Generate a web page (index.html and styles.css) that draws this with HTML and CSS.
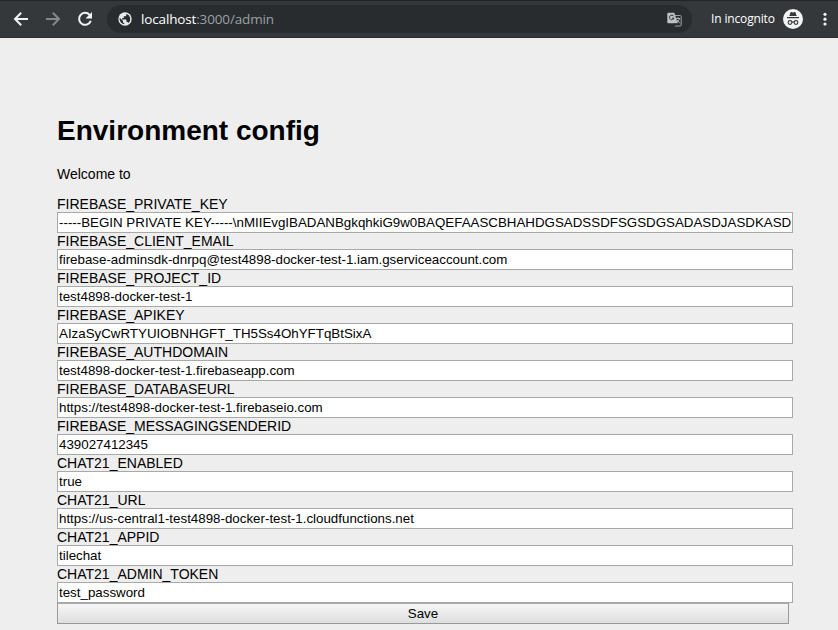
FILE: index.html
```html
<!DOCTYPE html>
<html lang="en">
<head>
<meta charset="utf-8">
<title>Environment config</title>
<link rel="stylesheet" href="styles.css">
</head>
<body>
<header class="toolbar">
  <svg class="nav" viewBox="0 0 16 16"><path d="M15 8H2.500M8.200 1.800 2 8l6.200 6.200"/></svg>
  <svg class="nav nav-off" viewBox="0 0 16 16"><path d="M1 8h12.500M7.800 1.800 14 8l-6.200 6.200"/></svg>
  <svg class="nav" viewBox="0 0 16 16"><path d="M12.600 3.800A6 6 0 1 0 13.800 9.700"/><path class="solid" d="M15 1v6.500H8.500z"/></svg>
  <div class="omnibox">
    <svg class="globe" viewBox="0 0 14 14"><circle cx="7" cy="7" r="6.700" fill="#e8eaed"/><path d="M8.300 1.700v1.200c0 .8-.6 1.300-1.300 1.300H5.800v1.300c0 .4-.3.700-.7.700H4v1.300h3.800c.4 0 .7.300.7.700v1.900h.6c.6 0 1.100.4 1.300.9A5.400 5.400 0 0 0 8.300 1.700zM1.700 5.800a5.400 5.400 0 0 0 4.600 6.500V11c-.8 0-1.300-.6-1.300-1.300V9z" fill="#292c2f"/></svg>
    <span class="url"><span class="host">localhost</span>:3000/admin</span>
    <svg class="translate" viewBox="0 0 15 15"><path d="M5.500 3.500h7.800c.5 0 .9.400.9.900v8.700c0 .5-.4.900-.9.900H7.500" fill="none" stroke="#9aa0a6"/><path d="M1.300.8h6l3.400 10.500H1.300a1 1 0 0 1-1-1V1.800a1 1 0 0 1 1-1z" fill="#bdc1c6"/><path d="M6.800 4.200A2.300 2.300 0 1 0 7 6.200H5M8 11.300 7.500 14l2.300-2.700" fill="none" stroke="#292c2f"/><path d="M8.800 6.500h4.400M11 5.300v1.200M12.400 6.500c-.4 2-1.500 3.200-2.500 4M9.700 7.800l3.300 3.600" fill="none" stroke="#bdc1c6" stroke-width=".9"/></svg>
  </div>
  <span class="mode">In incognito</span>
  <svg class="avatar" viewBox="0 0 20 20"><circle cx="10" cy="10" r="10" fill="#f1f3f4"/><path d="M6.300 7 7.500 3.400c.1-.3.400-.4.700-.3l1.800.5 1.800-.5c.3-.1.600 0 .7.300L13.700 7zM4 8h12v1.200H4z" fill="#35383b"/><g fill="none" stroke="#35383b" stroke-width="1.100"><circle cx="7" cy="13.500" r="1.900"/><circle cx="13" cy="13.500" r="1.900"/><path d="M8.900 13.200q1.100-.6 2.200 0"/></g></svg>
  <svg class="menu" viewBox="0 0 4 14"><circle cx="2" cy="2.300" r="1.600"/><circle cx="2" cy="7.200" r="1.600"/><circle cx="2" cy="12" r="1.600"/></svg>
</header>
<main>
  <h1>Environment config</h1>
  <p>Welcome to</p>
  <form>
    <label>FIREBASE_PRIVATE_KEY<input value="-----BEGIN PRIVATE KEY-----\nMIIEvgIBADANBgkqhkiG9w0BAQEFAASCBHAHDGSADSSDFSGSDGSADASDJASDKASD"></label>
    <label>FIREBASE_CLIENT_EMAIL<input value="firebase-adminsdk-dnrpq@test4898-docker-test-1.iam.gserviceaccount.com"></label>
    <label>FIREBASE_PROJECT_ID<input value="test4898-docker-test-1"></label>
    <label>FIREBASE_APIKEY<input value="AIzaSyCwRTYUIOBNHGFT_TH5Ss4OhYFTqBtSixA"></label>
    <label>FIREBASE_AUTHDOMAIN<input value="test4898-docker-test-1.firebaseapp.com"></label>
    <label>FIREBASE_DATABASEURL<input value="https://test4898-docker-test-1.firebaseio.com"></label>
    <label>FIREBASE_MESSAGINGSENDERID<input value="439027412345"></label>
    <label>CHAT21_ENABLED<input value="true"></label>
    <label>CHAT21_URL<input value="https://us-central1-test4898-docker-test-1.cloudfunctions.net"></label>
    <label>CHAT21_APPID<input value="tilechat"></label>
    <label>CHAT21_ADMIN_TOKEN<input value="test_password"></label>
    <button type="button">Save</button>
  </form>
</main>
</body>
</html>
```
FILE: styles.css
```css
* { box-sizing: border-box; }
body {
  margin: 0;
  height: 630px;
  overflow: hidden;
  background: #eee;
  color: #000;
  font: 14px/16px "Liberation Sans", Arial, sans-serif;
}
.toolbar {
  display: flex;
  align-items: center;
  height: 38px;
  padding: 0 11px 0 13px;
  background: #35383b;
  border-top: 1px solid #222427;
  border-bottom: 1px solid #292b2e;
  color: #fff;
  font-family: "Open Sans", "Noto Sans", sans-serif;
}
.nav {
  width: 16px;
  height: 16px;
  margin-right: 16px;
  fill: none;
  stroke: #f1f3f4;
  stroke-width: 2;
}
.nav-off { stroke: #85888b; }
.nav .solid { fill: #f1f3f4; stroke: none; }
.omnibox {
  display: flex;
  align-items: center;
  width: 585px;
  height: 28px;
  margin-left: -2px;
  padding: 0 10px 0 11px;
  border-radius: 14px;
  background: #292c2f;
}
.globe { width: 14px; height: 14px; margin-right: 9px; }
.url { flex: 1; color: #9aa0a6; font-size: 13.500px; letter-spacing: -0.150px; white-space: nowrap; }
.host { color: #fff; }
.translate { width: 15px; height: 15px; }
.mode { margin-left: 19px; font-size: 12px; letter-spacing: -0.150px; white-space: nowrap; }
.avatar { width: 20px; height: 20px; margin-left: auto; }
.menu { width: 4px; height: 14px; margin-left: 20px; fill: #f1f3f4; }
main { padding: 77px 45px 0 57px; }
h1 { margin: 0; font-size: 28px; line-height: 32px; }
p { margin: 19px 0 14px; }
form { display: flex; flex-direction: column; }
label { height: 37px; }
input {
  display: block;
  width: 736px;
  height: 21px;
  margin: 0;
  padding: 1px;
  border: 1px solid #a9a9a9;
  background: #fff;
  color: #000;
  font: 13.333px "Liberation Sans", Arial, sans-serif;
}
button {
  width: 732px;
  height: 21px;
  margin: 0;
  padding: 0;
  border: 1px solid #999;
  border-top-color: #a9a9a9;
  border-radius: 0;
  background: linear-gradient(#f6f6f6, #dedede);
  color: #000;
  font: 13.333px "Liberation Sans", Arial, sans-serif;
}
```
